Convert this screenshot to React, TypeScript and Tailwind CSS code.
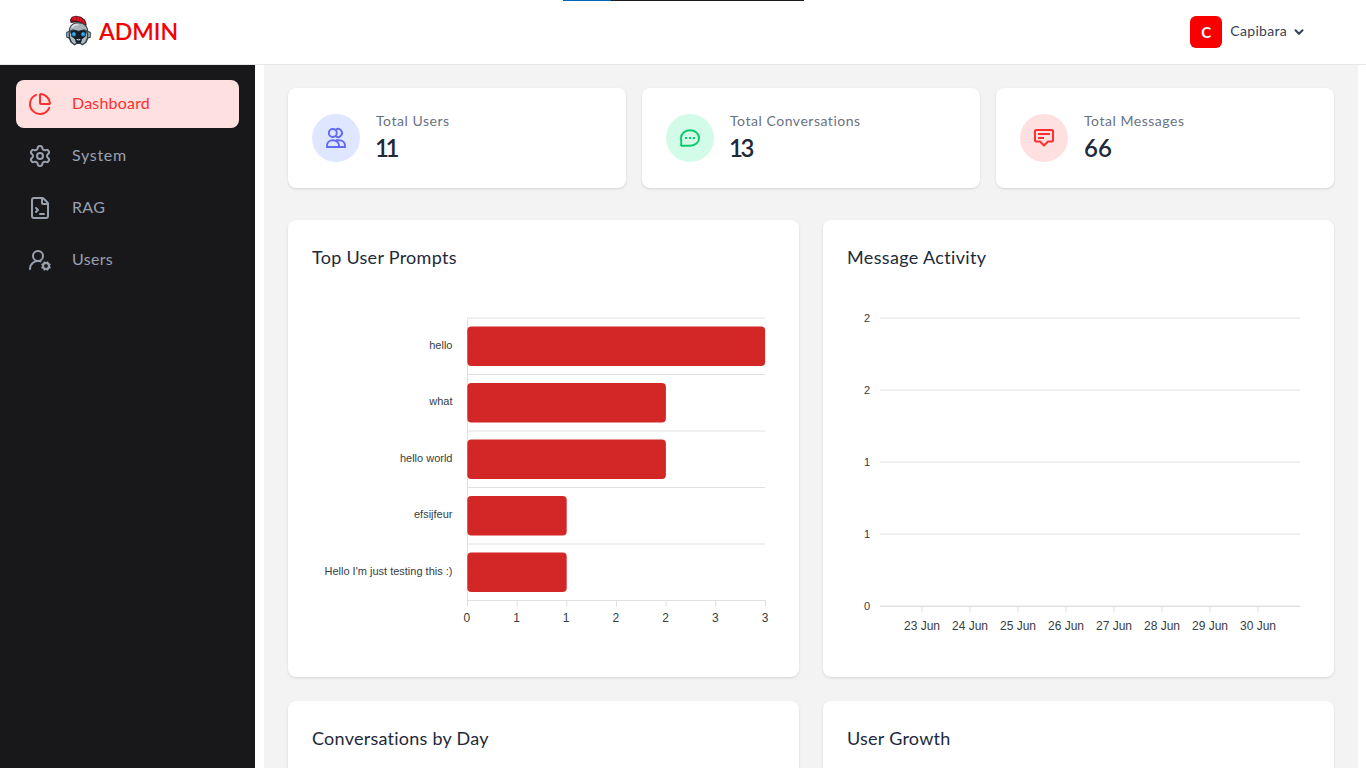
import React from "react";
import { ChartPie, ChevronDown, FileTerminal, Settings, UserRoundCog } from "lucide-react";

function Logo() {
  return (
    <svg width="28" height="32" viewBox="0 0 28 32" className="mb-0.5">
      <path d="M5.500 7.500L5 4.500L7 1.700L11 .7L16 1.700L20 4.800L21.600 9L21 12L17.500 9L13 7L6 8Z" fill="#4a1420" />
      <path d="M5.800 5.500L7.500 2.500L11 1.500L15.500 2.600L19 5.200L20.600 9L20 10.500L17.500 7.800L14 6.200L10 5.500Z" fill="#ee1420" />
      <path d="M8 3.200L9.500 5.500M11 1.500L12 5.800M14.300 2.200L14.500 6.300M17.300 3.800L16.600 7M19.600 6.300L18.400 8.500" stroke="#6b1420" strokeWidth=".7" />
      <path d="M13 7C8 7 4.200 10.500 3.700 16L1.200 17V22.500L3.700 23.500L5.500 27.500L9.500 30.500L12 29H15L17.500 30.500L21.500 27.500L23.300 23.500L25.800 22.500V17L23.300 16C22.800 10.500 19 7 13 7Z" fill="#344049" />
      <path d="M13 8.200C8.500 8.200 5.300 11 4.800 15.500L8 14.200L13.500 15.800L19 14.200L22.200 15.500C21.700 11 18 8.200 13 8.200Z" fill="#a8b4b9" />
      <path d="M6.800 12.500C8.300 10.400 11 9.400 13.500 9.600" stroke="#d9e1e3" strokeWidth="1.400" fill="none" />
      <path d="M2.200 17.800L3.700 17V22.300L2.200 21.700ZM24.800 17.800L23.300 17V22.300L24.800 21.700Z" fill="#a4b4bb" />
      <path d="M4.800 16L5.200 23L7 27L9.700 29L11.200 27.500L10.200 24L6.500 21.500ZM22.200 16L21.800 23L20 27L17.300 29L15.800 27.500L16.800 24L20.500 21.500Z" fill="#aebbc0" />
      <path d="M6 17C8 15 11 15 13.500 16.800C16 15 19 15 21 17L20.200 21.500L17 24L16 27.500H11L10 24L6.800 21.500Z" fill="#151d28" />
      <circle cx="8.800" cy="19.200" r="2.300" fill="#1474ad" />
      <circle cx="18.200" cy="19.200" r="2.300" fill="#1474ad" />
      <circle cx="8.900" cy="19" r="1.500" fill="#45aee6" />
      <circle cx="18.100" cy="19" r="1.500" fill="#45aee6" />
      <path d="M11.800 24.200Q13.500 25.700 15.200 24.200" stroke="#dbe1e3" strokeWidth="1.100" fill="none" />
    </svg>
  );
}

const nav = [
  { label: "Dashboard", icon: ChartPie, active: true, cls: "tracking-[0.2px]" },
  { label: "System", icon: Settings, active: false, cls: "tracking-[0.7px]" },
  { label: "RAG", icon: FileTerminal, active: false, cls: "tracking-[0.3px]" },
  { label: "Users", icon: UserRoundCog, active: false, cls: "tracking-[0.3px]" },
];

const UsersIcon = () => (
  <svg width="24" height="24" viewBox="0 0 24 24" fill="none" stroke="currentColor" strokeWidth="1.900">
    <circle cx="8.800" cy="7" r="4" />
    <path d="M11.800 3.650A4 4 0 1 1 11.800 10.350" />
    <path d="M3 21V19.500C3 16.500 5.600 14.300 8.800 14.300S15 16.500 15 19.500V21ZM12 14.300H15C18.500 14.300 21 16.500 21 19.500V21H15" />
  </svg>
);
const ChatIcon = () => (
  <svg width="24" height="24" viewBox="0 0 24 24" fill="none" stroke="currentColor" strokeWidth="1.900">
    <path d="M3 20L3.300 17.500L3 12C3 7.500 7 4.200 12 4.200S21.100 7.500 21.100 12S17 19.800 12 19.800H3Z" />
    <path d="M7 12H9M11 12H13M15 12H17" strokeWidth="2" />
  </svg>
);
const MessageIcon = () => (
  <svg width="24" height="24" viewBox="0 0 24 24" fill="none" stroke="currentColor" strokeWidth="2" strokeLinejoin="round">
    <path d="M4 4H20A1 1 0 0 1 21 5V14.500A1 1 0 0 1 20 15.500H16L12 19.500L8 15.500H4A1 1 0 0 1 3 14.500V5A1 1 0 0 1 4 4Z" />
    <path d="M6 8H18M6 12H12" />
  </svg>
);

const stats = [
  { label: "Total Users", value: "11", icon: UsersIcon, cls: "bg-[#dfe6ff] text-[#636af2]", num: "-ml-px tracking-[-3.500px]" },
  { label: "Total Conversations", value: "13", icon: ChatIcon, cls: "bg-[#d2fce8] text-[#0bca6c]", num: "-ml-px tracking-[-2.500px]" },
  { label: "Total Messages", value: "66", icon: MessageIcon, cls: "bg-[#ffe0e0] text-[#ff2f2f]", num: "" },
];

const prompts = [
  { label: "hello", value: 3 },
  { label: "what", value: 2 },
  { label: "hello world", value: 2 },
  { label: "efsijfeur", value: 1 },
  { label: "Hello I'm just testing this :)", value: 1 },
];

function PromptsChart() {
  return (
    <svg width="463" height="365" className="block font-['Liberation_Sans',Arial,sans-serif]">
      <g stroke="#e0e0e0">
        {[0, 1, 2, 3, 4].map((i) => (
          <line key={i} x1="155" x2="453" y1={30 + i * 56.5} y2={30 + i * 56.5} />
        ))}
        <line x1="155.500" x2="155.500" y1="30" y2="313" />
        <line x1="155" x2="454" y1="312.500" y2="312.500" />
        {[0, 1, 2, 3, 4, 5, 6].map((i) => (
          <line key={i} x1={155.5 + i * 49.65} x2={155.5 + i * 49.65} y1="312" y2="318.500" />
        ))}
      </g>
      {prompts.map((p, i) => (
        <g key={p.label}>
          <rect x="155.300" y={38.4 + i * 56.5} width={p.value * 99.2 + 0.2} height="39.600" rx="4" fill="#d32727" />
          <text x="140.500" y={60.9 + i * 56.5 - (i % 2 ? 0.6 : 0)} fontSize="11" textAnchor="end" fill="#373d3f">{p.label}</text>
        </g>
      ))}
      {[0, 1, 1, 2, 2, 3, 3].map((n, i) => (
        <text key={i} x={154.8 + i * 49.7} y="334" fontSize="12" textAnchor="middle" fill="#373d3f">{n}</text>
      ))}
    </svg>
  );
}

function ActivityChart() {
  return (
    <svg width="463" height="365" className="block font-['Liberation_Sans',Arial,sans-serif]">
      {[2, 2, 1, 1, 0].map((n, i) => (
        <g key={i}>
          <line x1="33" x2="453" y1={30 + i * 72} y2={30 + i * 72} stroke="#e0e0e0" />
          <text x="23" y={34 + i * 72} fontSize="11" textAnchor="end" fill="#373d3f">{n}</text>
        </g>
      ))}
      <line x1="33" x2="453" y1="318.500" y2="318.500" stroke="#e0e0e0" />
      {[23, 24, 25, 26, 27, 28, 29, 30].map((d, i) => (
        <g key={d}>
          <line x1={75 + i * 48} x2={75 + i * 48} y1="319" y2="324.500" stroke="#e0e0e0" />
          <text x={75 + i * 48} y="342" fontSize="12" textAnchor="middle" fill="#373d3f">{d} Jun</text>
        </g>
      ))}
    </svg>
  );
}

function Panel({ title, cls, children }: { title: string; cls: string; children?: React.ReactNode }) {
  return (
    <section className="h-[457px] rounded-lg bg-white p-6 pt-[23px] shadow-sm">
      <h3 className={`mb-[17px] text-lg leading-7 text-gray-800 ${cls}`}>{title}</h3>
      {children}
    </section>
  );
}

export default function App() {
  return (
    <div className="flex h-screen flex-col overflow-hidden bg-white font-['Lato',sans-serif] [font-variant-ligatures:none]">
      <div className="absolute left-[563px] top-0 flex h-px w-[241px] bg-[#1b1b1b]">
        <div className="w-12 bg-[#0067b8]" />
      </div>
      <header className="flex h-[65px] shrink-0 items-center justify-between border-b border-gray-200 pl-[65px] pr-[60px]">
        <div className="flex items-center">
          <Logo />
          <span className="ml-[6px] pb-[3px] text-[23px] leading-8 font-semibold text-[#f50000]">ADMIN</span>
        </div>
        <div className="flex items-center">
          <div className="flex size-8 items-center justify-center rounded-md bg-[#f80000] text-[15px] font-bold text-white">C</div>
          <span className="ml-2 pb-[3px] text-sm tracking-[0.3px] text-gray-700">Capibara</span>
          <ChevronDown className="ml-[5px] size-3.5 text-gray-700" strokeWidth={3.5} />
        </div>
      </header>
      <div className="flex min-h-0 flex-1">
        <aside className="flex w-[255px] shrink-0 flex-col gap-1 bg-[#18181b] px-4 pt-[15px]">
          {nav.map(({ label, icon: Icon, active, cls }) => (
            <a key={label} className={`flex h-12 shrink-0 items-center gap-5 rounded-lg px-3 text-base ${active ? "bg-[#ffe0e0] text-[#ff2f2f]" : "text-gray-400"}`}>
              <Icon size={24} strokeWidth={2} />
              <span className={`pb-0.5 ${cls}`}>{label}</span>
            </a>
          ))}
        </aside>
        <main className="ml-[9px] mr-2 min-w-0 flex-1 overflow-hidden bg-[#f3f3f3] px-6 pt-[23px]">
          <div className="grid grid-cols-3 gap-4">
            {stats.map(({ label, value, icon: Icon, cls, num }) => (
              <div key={label} className="flex h-[100px] items-center gap-4 rounded-lg bg-white px-6 shadow-sm">
                <div className={`flex size-12 items-center justify-center rounded-full ${cls}`}><Icon /></div>
                <div className="pb-px">
                  <p className="mb-px text-sm leading-5 tracking-[0.53px] text-gray-500">{label}</p>
                  <p className={`text-2xl leading-8 font-semibold text-gray-800 ${num}`}>{value}</p>
                </div>
              </div>
            ))}
          </div>
          <div className="mt-8 grid grid-cols-2 gap-6">
            <Panel title="Top User Prompts" cls="tracking-[0.28px]"><PromptsChart /></Panel>
            <Panel title="Message Activity" cls="tracking-[0.35px]"><ActivityChart /></Panel>
            <Panel title="Conversations by Day" cls="tracking-[0.25px]" />
            <Panel title="User Growth" cls="tracking-[0.25px]" />
          </div>
        </main>
      </div>
    </div>
  );
}
